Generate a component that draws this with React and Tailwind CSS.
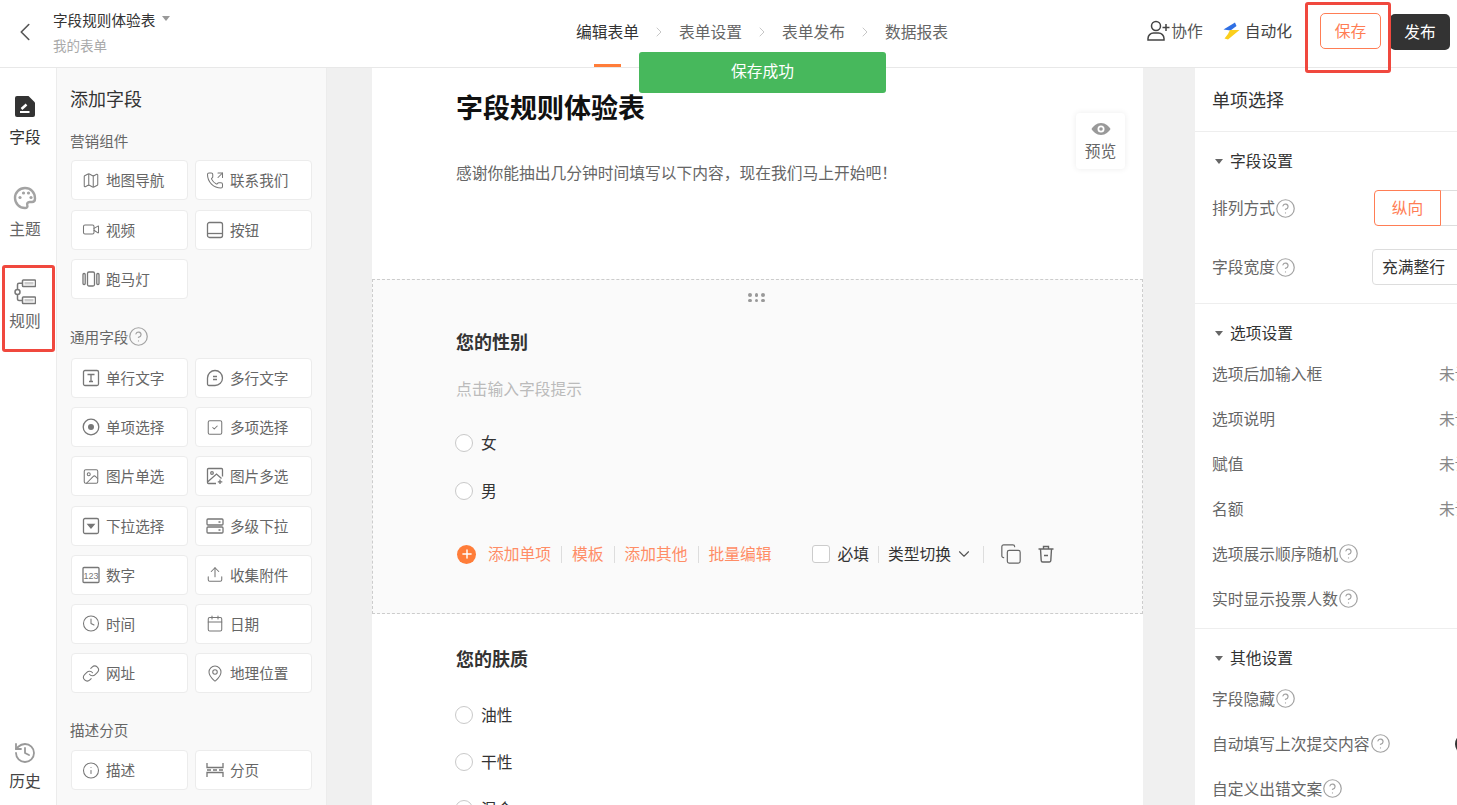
import {
  ChevronLeft, ChevronRight, ChevronDown, CircleHelp, Map, PhoneOutgoing, Video, SquareCheck,
  Image, Upload, Clock, Calendar, Link, MapPin, Info, History, Copy, Plus,
} from 'lucide-react';

const s = { width: 18, height: 18, viewBox: '0 0 18 18', fill: 'none', stroke: 'currentColor', strokeWidth: 1.3 };

const BookIcon = () => (
  <svg {...s}><rect x="1.500" y="1.500" width="15" height="15" rx="2" /><path d="M1.500 12.500h15" /></svg>
);
const MarqueeIcon = () => (
  <svg {...s}><rect x="5.500" y="2" width="7" height="14" rx="1.500" /><rect x="1" y="3.500" width="2.200" height="11" rx="1" /><rect x="14.800" y="3.500" width="2.200" height="11" rx="1" /></svg>
);
const TextIcon = () => (
  <svg {...s}><rect x="1.500" y="1.500" width="15" height="15" rx="1.500" /><path d="M5.500 5.500h7M9 5.500v7M7 12.500h4" /></svg>
);
const BubbleIcon = () => (
  <svg {...s}><path d="M9 1.500a7.500 7.500 0 1 1 0 15H3A1.500 1.500 0 0 1 1.500 15V9A7.500 7.500 0 0 1 9 1.500Z" /><path d="M7 7.500h4M7 10.500h4" /></svg>
);
const RadioIcon = () => (
  <svg {...s}><circle cx="9" cy="9" r="7.800" /><circle cx="9" cy="9" r="3" fill="currentColor" stroke="none" /></svg>
);
const ImageMultiIcon = () => (
  <svg {...s}><path d="M16.500 9.500V2.500a1 1 0 0 0-1-1h-13a1 1 0 0 0-1 1v13a1 1 0 0 0 1 1h7.500" /><circle cx="6" cy="6" r="1.300" /><path d="M1.500 15 10.500 7l5 4.500" /><path d="M14 12.500v4.500M11.800 14.800h4.500" /></svg>
);
const DropdownIcon = () => (
  <svg {...s}><rect x="1.500" y="1.500" width="15" height="15" rx="1.500" /><path d="M6 7.500h6L9 11Z" fill="currentColor" /></svg>
);
const LevelsIcon = () => (
  <svg {...s}><rect x="1" y="2" width="16" height="6" rx="1" /><rect x="1" y="10" width="16" height="6" rx="1" /><path d="M12.500 5h2M12.500 13h2" /></svg>
);
const NumberIcon = () => (
  <svg {...s}><rect x="1" y="1.500" width="16" height="15" rx="1" /><text x="9" y="12.500" textAnchor="middle" fontSize="9" stroke="none" fill="currentColor" fontFamily="Liberation Sans">123</text></svg>
);
const PageIcon = () => (
  <svg {...s}><path d="M1 2v4.500h16V2M1 16v-4.500h16V16M1 9h4M7 9h4M13 9h4" /></svg>
);
const FieldIcon = () => (
  <svg width="22" height="23" viewBox="0 0 22 23"><path d="M3 1h11.500L21 7.500V20a2 2 0 0 1-2 2H3a2 2 0 0 1-2-2V3a2 2 0 0 1 2-2Z" fill="#333" /><path d="M6 17h9.500" stroke="#fff" strokeWidth="2" /><path d="m7.500 14 5-4.500" stroke="#fff" strokeWidth="2.500" /></svg>
);
const PaletteIcon = () => (
  <svg width="24" height="24" viewBox="0 0 24 24" fill="none"><path d="M12 2C6.500 2 2 6.500 2 12s4.500 10 10 10c2 0 2.800-1.200 2.300-2.700-.6-1.800.4-3.300 2.200-3.300h2.500c1.900 0 3-1.400 3-3.500C22 6 17.500 2 12 2Z" stroke="#a3a3a3" strokeWidth="2.400" /><circle cx="7" cy="11.500" r="1.600" fill="#a3a3a3" /><circle cx="10.500" cy="7" r="1.600" fill="#a3a3a3" /><circle cx="15.500" cy="7" r="1.600" fill="#a3a3a3" /><circle cx="18" cy="11.500" r="1.600" fill="#a3a3a3" /></svg>
);
const RuleIcon = () => (
  <svg width="22" height="26" viewBox="0 0 22 26" fill="none" stroke="#777" strokeWidth="1.500"><rect x="8.500" y="1" width="13" height="6.500" rx="0.800" /><rect x="8.500" y="18" width="13" height="6.500" rx="0.800" /><rect x="10.500" y="3" width="9" height="2.500" fill="#ccc" stroke="none" /><rect x="10.500" y="20" width="9" height="2.500" fill="#ccc" stroke="none" /><circle cx="3.500" cy="13" r="2.500" /><path d="M8.500 4.200H5a1.500 1.500 0 0 0-1.500 1.500v4.800M3.500 15.500v4.700A1.500 1.500 0 0 0 5 21.500h3.500" /></svg>
);
const BoltIcon = () => (
  <svg width="17" height="18" viewBox="0 0 17 18"><path d="M0.500 7.500 12 0.500l1.500 3.500-6 4.500Z" fill="#2f6fe4" /><path d="M7 8h9.500L5 17.500 1.500 16.500 5 12Z" fill="#fbcf1d" /></svg>
);
const UserAddIcon = () => (
  <svg width="23" height="21" viewBox="0 0 23 21" fill="none" stroke="#444" strokeWidth="1.500"><circle cx="9" cy="6" r="4.500" /><path d="M1 18.500a5.500 5.500 0 0 1 5.500-5.500h5a5.500 5.500 0 0 1 5.500 5.500V20H1Z" /><path d="M15.500 7.500h7M19 4v7" /></svg>
);
const TrashIcon = () => (
  <svg width="20" height="20" viewBox="0 0 20 20" fill="none" stroke="#666" strokeWidth="1.400"><path d="M2.500 5h15M7.500 5V2.500h5V5M4.500 5l.7 11.500a1.500 1.500 0 0 0 1.500 1.500h6.600a1.500 1.500 0 0 0 1.500-1.500L15.500 5M8 11.500h4" /></svg>
);
const EyeIcon = () => (
  <svg width="20" height="14" viewBox="0 0 20 14"><path d="M10 1c4.500 0 8 3.500 9.500 6-1.500 2.500-5 6-9.500 6S2 9.500.5 7C2 4.500 5.500 1 10 1Z" fill="#999" /><circle cx="10" cy="7" r="3.500" fill="#fff" /><circle cx="10" cy="7" r="1.800" fill="#999" /></svg>
);
const Caret = () => <span className="w-0 h-0 border-x-[4px] border-x-transparent border-t-[5px] border-t-[#666]" />;
const Help = () => <CircleHelp size={21} strokeWidth={1.400} className="text-[#a3a3a3] shrink-0" />;

const lucide = (I) => () => <I size={21} strokeWidth={1.400} />;

const marketing = [
  ['地图导航', lucide(Map)], ['联系我们', lucide(PhoneOutgoing)], ['视频', lucide(Video)], ['按钮', BookIcon], ['跑马灯', MarqueeIcon],
];
const common = [
  ['单行文字', TextIcon], ['多行文字', BubbleIcon], ['单项选择', RadioIcon], ['多项选择', lucide(SquareCheck)],
  ['图片单选', lucide(Image)], ['图片多选', ImageMultiIcon], ['下拉选择', DropdownIcon], ['多级下拉', LevelsIcon],
  ['数字', NumberIcon], ['收集附件', lucide(Upload)], ['时间', lucide(Clock)], ['日期', lucide(Calendar)],
  ['网址', lucide(Link)], ['地理位置', lucide(MapPin)],
];
const description = [['描述', lucide(Info)], ['分页', PageIcon]];

function FieldGrid({ items, className = 'gap-y-[9.200px]' }) {
  return (
    <div className={`grid grid-cols-[117px_117px] gap-x-[7px] ${className}`}>
      {items.map(([name, Icon]) => (
        <div key={name} className="h-10 bg-white border border-[#ececec] rounded flex items-center gap-[6px] pl-[10px] text-[14.625px] text-[#666]">
          <span className="w-[18px] h-5 text-[#777] flex items-center justify-center"><Icon /></span>
          {name}
        </div>
      ))}
    </div>
  );
}

function RailItem({ icon, label, className = '' }) {
  return (
    <div className={`flex flex-col items-center text-[15.750px] leading-[20px] ${className}`}>
      {icon}
      {label}
    </div>
  );
}

function SectionTitle({ children }) {
  return (
    <div className="flex items-center gap-[7px] text-[15.750px] text-[#333] pl-[3px] h-[22px]">
      <Caret />
      {children}
    </div>
  );
}

function SettingRow({ label, help, value, children }) {
  return (
    <div className="h-[45px] flex items-center text-[15.750px] text-[#666] whitespace-nowrap">
      <div className="w-[227px] flex items-center">
        {label}
        {help && <Help />}
      </div>
      {value && <span className="text-[#888]">{value}</span>}
      {children}
    </div>
  );
}

function RadioRow({ label, className = 'h-[48px]' }) {
  return (
    <div className={`-ml-[1px] flex items-center gap-[8px] text-[15.750px] text-[#333] ${className}`}>
      <span className="w-[18px] h-[18px] rounded-full border border-[#c9c9c9] bg-white" />
      {label}
    </div>
  );
}

const Sep = () => <span className="w-px h-[17px] bg-[#ddd]" />;

export default function App() {
  return (
    <div className="relative h-[805px] w-[1457px] overflow-hidden bg-white flex flex-col [font-family:'Noto_Sans_CJK_SC','Liberation_Sans',sans-serif] text-[#333]">
      <header className="h-[68px] shrink-0 border-b border-[#e8e8e8] flex items-center relative">
        <ChevronLeft size={30} strokeWidth={1.300} className="ml-[10px] -mt-[3px] text-[#555]" />
        <div className="ml-[13px] w-[523px] pb-[4px]">
          <div className="flex items-center gap-[7px] text-[14.625px] leading-[20px]">字段规则体验表<span className="w-0 h-0 border-x-[4px] border-x-transparent border-t-[5px] border-t-[#999] -mt-[3px]" /></div>
          <div className="text-[13.500px] leading-[18px] mt-[6px] text-[#aaa]">我的表单</div>
        </div>
        <nav className="flex items-center text-[15.750px] text-[#666] h-full pb-[4px]">
          <div className="relative h-full flex items-center text-[#333]">
            编辑表单
            <span className="absolute -bottom-[4px] left-[18px] w-[27px] h-[3px] bg-[#ff7d39]" />
          </div>
          <ChevronRight size={16} strokeWidth={1} className="mx-[12px] text-[#aaa]" />
          <span>表单设置</span>
          <ChevronRight size={16} strokeWidth={1} className="mx-[12px] text-[#aaa]" />
          <span>表单发布</span>
          <ChevronRight size={16} strokeWidth={1} className="mx-[12px] text-[#aaa]" />
          <span>数据报表</span>
        </nav>
        <div className="ml-auto flex items-center text-[15.750px] pr-[7px] pb-[6px]">
          <UserAddIcon />
          <span className="ml-[1px] text-[#555]">协作</span>
          <span className="ml-[20px] mr-[5px] flex"><BoltIcon /></span>
          <span className="text-[#444]">自动化</span>
          <button className="ml-[28px] w-[61px] h-[36px] rounded-[5px] border border-[#ff7d55] bg-white text-[#ff7d55]">保存</button>
          <button className="ml-[9px] w-[60px] h-[36px] mt-[2px] rounded-[5px] bg-[#333] text-white">发布</button>
        </div>
      </header>

      <div className="flex flex-1 min-h-0">
        <aside className="w-[57px] shrink-0 border-r border-[#ececec] flex flex-col pt-[27px] pb-[14px] pr-[6px]">
          <RailItem icon={<FieldIcon />} label="字段" className="gap-[9px]" />
          <RailItem icon={<PaletteIcon />} label="主题" className="mt-[39px] gap-[9px] text-[#666]" />
          <RailItem icon={<RuleIcon />} label="规则" className="mt-[40px] gap-[6px] text-[#666]" />
          <RailItem icon={<History size={24} strokeWidth={1.800} className="text-[#999]" />} label="历史" className="mt-auto gap-[6px] text-[#444]" />
        </aside>

        <section className="w-[270px] shrink-0 bg-[#f9f9f9] border-r border-[#ececec] pl-[13px] pt-[18px]">
          <h2 className="text-[18px] leading-[24px] font-normal text-[#333]">添加字段</h2>
          <h3 className="mt-[21px] mb-[9px] text-[14.625px] leading-[20px] font-normal text-[#666]">营销组件</h3>
          <div className="pl-[1px]"><FieldGrid items={marketing} className="gap-y-[9.500px]" /></div>
          <h3 className="mt-[27px] mb-[11px] text-[14.625px] leading-[20px] font-normal text-[#666] flex items-center">通用字段<Help /></h3>
          <div className="pl-[1px]"><FieldGrid items={common} /></div>
          <h3 className="mt-[27px] mb-[10px] text-[14.625px] leading-[20px] font-normal text-[#666]">描述分页</h3>
          <div className="pl-[1px]"><FieldGrid items={description} /></div>
        </section>

        <main className="w-[868px] shrink-0 bg-[#f0f0f0] pl-[45px] overflow-hidden">
          <div className="relative w-[771px] bg-white">
            <div className="h-[211px] pl-[84px] pt-[20px]">
              <h1 className="text-[27px] leading-[38px] font-bold text-[#111]">字段规则体验表</h1>
              <p className="mt-[36px] text-[15.750px] leading-[22px] text-[#666]">感谢你能抽出几分钟时间填写以下内容，现在我们马上开始吧！</p>
            </div>
            <div className="absolute right-[18px] top-[45px] w-[49px] h-[56px] bg-white rounded shadow-[0_0_6px_rgba(0,0,0,0.08)] flex flex-col items-center pt-[9px] text-[15.750px] leading-[20px] text-[#666] gap-[5px]">
              <EyeIcon />
              预览
            </div>

            <div className="h-[335px] border border-dashed border-[#ccc] bg-[#fafafa] pl-[83px] relative">
              <div className="absolute top-[13px] left-[375px] grid grid-cols-3 gap-x-[3px] gap-y-[2px]">
                {[0, 1, 2, 3, 4, 5].map((i) => <span key={i} className="w-[3.500px] h-[3.500px] rounded-full bg-[#999]" />)}
              </div>
              <h3 className="pt-[48px] text-[18px] leading-[26px] font-bold text-[#333]">您的性别</h3>
              <div className="mt-[24px] text-[15.750px] leading-[22px] text-[#bbb]">点击输入字段提示</div>
              <div className="mt-[19px]">
                <RadioRow label="女" />
                <RadioRow label="男" />
              </div>
              <div className="mt-[28px] pl-[1px] flex items-center text-[15.750px] h-[22px]">
                <span className="w-[19px] h-[19px] rounded-full bg-[#ff7d39] flex items-center justify-center text-white"><Plus size={14} strokeWidth={2.500} /></span>
                <div className="ml-[12px] flex items-center gap-[10px] text-[#ff8d66]">
                  添加单项<Sep />模板<Sep />添加其他<Sep />批量编辑
                </div>
                <span className="ml-[40px] w-[18px] h-[18px] rounded-[3px] border border-[#ccc] bg-white" />
                <span className="ml-[8px]">必填</span>
                <span className="mx-[9px] flex"><Sep /></span>
                <span>类型切换</span>
                <ChevronDown size={18} strokeWidth={1.500} className="ml-[4px] text-[#555]" />
                <span className="ml-[10px] flex"><Sep /></span>
                <Copy size={22} strokeWidth={1.300} className="ml-[16px] text-[#666]" />
                <span className="ml-[14px] flex"><TrashIcon /></span>
              </div>
            </div>

            <div className="pl-[84px] pt-[31px] h-[300px]">
              <h3 className="text-[18px] leading-[26px] font-bold text-[#333]">您的肤质</h3>
              <div className="mt-[20px]">
                <RadioRow label="油性" className="h-[47px]" />
                <RadioRow label="干性" className="h-[47px]" />
                <RadioRow label="混合" className="h-[47px]" />
              </div>
            </div>
          </div>
        </main>

        <aside className="w-[262px] shrink-0 overflow-hidden">
          <div className="w-[400px]">
            <div className="h-[64px] border-b border-[#eee] pl-[17px] flex items-center text-[18px] text-[#333]">单项选择</div>
            <div className="border-b border-[#eee] h-[172px] pl-[17px] pt-[18px]">
              <SectionTitle>字段设置</SectionTitle>
              <div className="mt-[18px] h-[36px] flex items-center text-[15.750px] text-[#666]">
                <div className="w-[162px] flex items-center">排列方式<Help /></div>
                <span className="w-[67px] h-[36px] flex items-center justify-center border border-[#ff7d55] rounded-l text-[#ff7d55]">纵向</span>
                <span className="w-[67px] h-[36px] border border-l-0 border-[#ddd]" />
              </div>
              <div className="mt-[23px] h-[36px] flex items-center text-[15.750px] text-[#666]">
                <div className="w-[160px] flex items-center">字段宽度<Help /></div>
                <span className="w-[150px] h-[36px] flex items-center pl-[9px] border border-[#ddd] rounded text-[#333]">充满整行</span>
              </div>
            </div>
            <div className="border-b border-[#eee] h-[325px] pl-[17px] pt-[18px]">
              <SectionTitle>选项设置</SectionTitle>
              <div className="mt-[7px]">
                <SettingRow label="选项后加输入框" value="未设置" />
                <SettingRow label="选项说明" value="未设置" />
                <SettingRow label="赋值" value="未设置" />
                <SettingRow label="名额" value="未设置" />
                <SettingRow label="选项展示顺序随机" help />
                <SettingRow label="实时显示投票人数" help />
              </div>
            </div>
            <div className="pl-[17px] pt-[18px]">
              <SectionTitle>其他设置</SectionTitle>
              <div className="mt-[7px]">
                <SettingRow label="字段隐藏" help />
                <SettingRow label="自动填写上次提交内容" help>
                  <span className="ml-[16px] w-[40px] h-[22px] rounded-full bg-[#333]" />
                </SettingRow>
                <SettingRow label="自定义出错文案" help />
              </div>
            </div>
          </div>
        </aside>
      </div>

      {/* toast and the red marks lie over the page */}
      <div className="absolute left-[639px] top-[52px] w-[247px] h-[41px] pb-[4px] rounded-[3px] bg-[#47b85c] text-white text-[15.750px] flex items-center justify-center">保存成功</div>
      <div className="absolute left-[2px] top-[265px] w-[53px] h-[87px] rounded-[3px] border-[3px] border-[#f0483e]" />
      <div className="absolute left-[1305px] top-[2px] w-[86px] h-[71px] rounded-[3px] border-[3px] border-[#f0483e]" />
    </div>
  );
}
